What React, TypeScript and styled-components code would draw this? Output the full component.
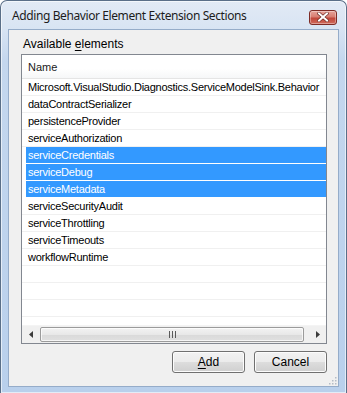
import React from "react";
import styled, { createGlobalStyle } from "styled-components";

const GlobalStyle = createGlobalStyle`
  html, body {
    margin: 0;
    padding: 0;
    background: #ffffff;
  }
  body {
    font-family: "Liberation Sans", Arial, sans-serif;
  }
`;

const items = [
  "Microsoft.VisualStudio.Diagnostics.ServiceModelSink.Behavior",
  "dataContractSerializer",
  "persistenceProvider",
  "serviceAuthorization",
  "serviceCredentials",
  "serviceDebug",
  "serviceMetadata",
  "serviceSecurityAudit",
  "serviceThrottling",
  "serviceTimeouts",
  "workflowRuntime",
];

const selected = ["serviceCredentials", "serviceDebug", "serviceMetadata"];

const Window = styled.div`
  width: 347px;
  height: 393px;
  box-sizing: border-box;
  display: flex;
  flex-direction: column;
  border: 1px solid #5a6f88;
  border-bottom: none;
  border-radius: 7px 7px 0 0;
  background: linear-gradient(
    to bottom,
    #e2eaf5 0px,
    #d8e4f3 28px,
    #c4d7ee 60px,
    #b9d0ec 100%
  );
  box-shadow: inset 0 0 0 1px rgba(255, 255, 255, 0.6);
  overflow: hidden;
`;

const TitleBar = styled.div`
  height: 27px;
  flex: none;
  display: flex;
  align-items: center;
  padding: 0 9px 0 11px;
`;

const Title = styled.div`
  flex: 1;
  font-family: "Noto Sans", "Open Sans", sans-serif;
  font-size: 12px;
  color: #1c1c1c;
  padding-top: 1px;
  letter-spacing: -0.4px;
`;

const CloseButton = styled.div`
  width: 28px;
  height: 15px;
  margin-top: 5px;
  box-sizing: border-box;
  border: 1px solid #7d2b25;
  border-radius: 3px;
  background: linear-gradient(to bottom, #e6a39a 0%, #d87d71 45%, #c1463a 55%, #cf6b5c 100%);
  box-shadow: inset 0 0 0 1px rgba(255, 255, 255, 0.35);
  display: flex;
  align-items: center;
  justify-content: center;
`;

const Client = styled.div`
  flex: 1;
  margin: 1px 7px 6px 7px;
  background: #f0f0f0;
  border: 1px solid #95acc9;
  display: flex;
  flex-direction: column;
  padding: 7px 11px 0 12px;
  position: relative;
`;

const Label = styled.div`
  font-size: 12px;
  color: #000;
  height: 15px;
  line-height: 15px;
  margin-left: 2px;
  margin-bottom: 2px;
  u {
    text-decoration: underline;
    text-underline-offset: 2px;
  }
`;

const ListBox = styled.div`
  height: 290px;
  box-sizing: border-box;
  border: 1px solid #828790;
  background: #ffffff;
  display: flex;
  flex-direction: column;
  overflow: hidden;
`;

const Header = styled.div`
  height: 24px;
  flex: none;
  box-sizing: border-box;
  border-bottom: 1px solid #e5e5e5;
  background: linear-gradient(to bottom, #ffffff 0%, #ffffff 60%, #f6f7f8 100%);
  display: flex;
  align-items: center;
  padding-left: 6px;
  font-size: 11px;
  color: #1a1a1a;
`;

const Rows = styled.div`
  flex: 1;
  overflow: hidden;
  display: flex;
  flex-direction: column;
`;

const Row = styled.div<{ $selected?: boolean }>`
  height: 17px;
  flex: none;
  box-sizing: border-box;
  border-bottom: 1px solid ${(p) => (p.$selected ? "#ffffff" : "#f0f0f0")};
  padding-left: 4px;
  display: flex;
`;

const Cell = styled.div<{ $selected?: boolean }>`
  flex: 1;
  height: 16px;
  line-height: 16px;
  padding-left: 2px;
  font-size: 11px;
  letter-spacing: -0.25px;
  white-space: nowrap;
  color: ${(p) => (p.$selected ? "#ffffff" : "#000000")};
  background: ${(p) => (p.$selected ? "#3399ff" : "transparent")};
`;

const ScrollBar = styled.div`
  height: 17px;
  flex: none;
  display: flex;
  align-items: stretch;
  background: #f0f0f0;
  border-top: 1px solid #f4f4f4;
`;

const Arrow = styled.div`
  width: 17px;
  flex: none;
  display: flex;
  align-items: center;
  justify-content: center;
`;

const Track = styled.div`
  flex: 1;
  display: flex;
  align-items: stretch;
  padding: 1px 5px 1px 1px;
`;

const Thumb = styled.div`
  flex: 1;
  box-sizing: border-box;
  border: 1px solid #9b9b9b;
  border-radius: 2px;
  background: linear-gradient(to bottom, #f3f3f3 0%, #e8e8e8 50%, #d9d9d9 51%, #e0e0e0 100%);
  box-shadow: inset 0 0 0 1px rgba(255, 255, 255, 0.7);
  display: flex;
  align-items: center;
  justify-content: center;
`;

const ButtonRow = styled.div`
  display: flex;
  justify-content: flex-end;
  gap: 9px;
  margin-top: 7px;
`;

const Button = styled.div`
  width: 73px;
  height: 22px;
  box-sizing: border-box;
  border: 1px solid #707070;
  border-radius: 3px;
  background: linear-gradient(to bottom, #f2f2f2 0%, #ebebeb 50%, #dddddd 51%, #cfcfcf 100%);
  box-shadow: inset 0 0 0 1px #fcfcfc;
  display: flex;
  align-items: center;
  justify-content: center;
  font-size: 12px;
  color: #000;
  u {
    text-decoration: underline;
    text-underline-offset: 2px;
  }
`;

const Grip = styled.svg`
  position: absolute;
  right: 1px;
  bottom: 1px;
`;

export default function App() {
  return (
    <>
      <GlobalStyle />
      <Window>
        <TitleBar>
          <Title>Adding Behavior Element Extension Sections</Title>
          <CloseButton>
            <svg width="12" height="10" viewBox="0 0 12 10">
              <path
                d="M2 1.5 L10 8.5 M10 1.5 L2 8.5"
                stroke="#6a2a25"
                strokeWidth="3.2"
                strokeLinecap="square"
              />
              <path
                d="M2 1.5 L10 8.5 M10 1.5 L2 8.5"
                stroke="#ffffff"
                strokeWidth="2"
                strokeLinecap="square"
              />
            </svg>
          </CloseButton>
        </TitleBar>
        <Client>
          <Label>
            Available <u>e</u>lements
          </Label>
          <ListBox>
            <Header>Name</Header>
            <Rows>
              {items.map((name) => {
                const sel = selected.includes(name);
                return (
                  <Row key={name} $selected={sel}>
                    <Cell $selected={sel}>{name}</Cell>
                  </Row>
                );
              })}
              {Array.from({ length: 4 }).map((_, i) => (
                <Row key={"empty" + i}>
                  <Cell />
                </Row>
              ))}
            </Rows>
            <ScrollBar>
              <Arrow>
                <svg width="4" height="7" viewBox="0 0 4 7">
                  <path d="M4 0 L0 3.5 L4 7 Z" fill="#3c3c3c" />
                </svg>
              </Arrow>
              <Track>
                <Thumb>
                  <svg width="7" height="7" viewBox="0 0 7 7">
                    <path d="M0.5 0 V7 M3.5 0 V7 M6.5 0 V7" stroke="#5a5a5a" strokeWidth="1" />
                  </svg>
                </Thumb>
              </Track>
              <Arrow>
                <svg width="4" height="7" viewBox="0 0 4 7">
                  <path d="M0 0 L4 3.5 L0 7 Z" fill="#3c3c3c" />
                </svg>
              </Arrow>
            </ScrollBar>
          </ListBox>
          <ButtonRow>
            <Button>
              <u>A</u>dd
            </Button>
            <Button>Cancel</Button>
          </ButtonRow>
          <Grip width="10" height="10" viewBox="0 0 10 10">
            {[
              [8, 2],
              [8, 5],
              [8, 8],
              [5, 5],
              [5, 8],
              [2, 8],
            ].map(([x, y]) => (
              <rect key={`${x}-${y}`} x={x} y={y} width="1.5" height="1.5" fill="#b4bcc6" />
            ))}
          </Grip>
        </Client>
      </Window>
    </>
  );
}
